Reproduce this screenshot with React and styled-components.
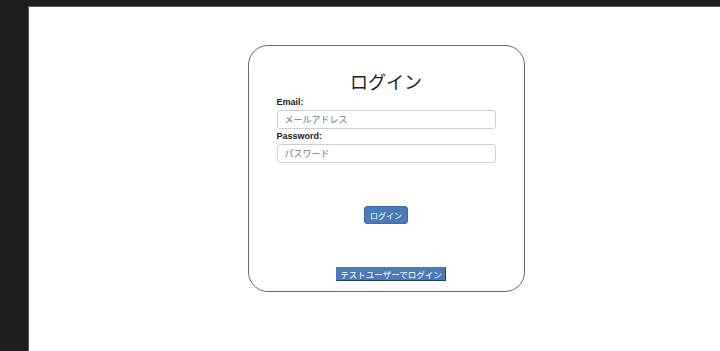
import React, { useState } from 'react'
import styled, { createGlobalStyle } from 'styled-components'

const GlobalStyle = createGlobalStyle`
html,body{
    margin:0;
    padding:0;
    background-color:#1e1e1e;
    overflow:hidden;
    font-family:"Liberation Sans","Noto Sans CJK JP",Arial,sans-serif;
}
`

function App(){
    const [email,setEmail]=useState("")
    const [password,setPassword]=useState("")

    return(
       <>
       <GlobalStyle/>
       <Screen>
           <Page>
               <Card onSubmit={(e)=>e.preventDefault()}>
                   <Title>ログイン</Title>
                   <Label>Email:</Label>
                   <Input type="email" value={email} placeholder="メールアドレス" onChange={(e)=>setEmail(e.target.value)} />
                   <Label>Password:</Label>
                   <Input type="password" value={password} placeholder="パスワード" onChange={(e)=>setPassword(e.target.value)} />
                   <LoginButton type="submit">ログイン</LoginButton>
                   <TestButton type="button">テストユーザーでログイン</TestButton>
               </Card>
           </Page>
       </Screen>
       </>
    )
}

const Screen=styled.div`
height:351px;
padding:6px 0 0 28px;
box-sizing:border-box;
`
const Page=styled.div`
width:715px;
height:100%;
background-color:#fff;
border-top:1px solid #5a5a5a;
border-left:1px solid #5a5a5a;
box-sizing:border-box;
display:flex;
justify-content:center;
align-items:flex-start;
padding-top:38px;
`
const Card=styled.form`
width:277px;
box-sizing:border-box;
border:1px solid #6b6b6b;
border-radius:20px;
padding:26px 28px 10px 28px;
display:flex;
flex-direction:column;
`
const Title=styled.h1`
margin:0;
font-size:18px;
line-height:23px;
font-weight:400;
color:#222;
text-align:center;
`
const Label=styled.label`
font-size:9px;
line-height:11px;
font-weight:700;
color:#222;
margin-top:2px;
`
const Input=styled.input`
margin-top:2px;
height:19px;
box-sizing:border-box;
border:1px solid #cfcfcf;
border-radius:3px;
padding:0 7px;
font-size:9px;
font-family:inherit;
color:#333;
::placeholder{
    color:#9a9a9a;
}
:focus{
    outline:none;
}
`
const LoginButton=styled.button`
align-self:center;
margin-top:43px;
width:44px;
height:18px;
padding:0;
border:1px solid #3f6ea8;
border-radius:3px;
background-color:#4a7ab8;
color:#fff;
font-size:8px;
font-family:inherit;
cursor:pointer;
`
const TestButton=styled.button`
align-self:center;
margin:43px 0 0 10px;
width:110px;
height:14px;
padding:0;
border:1px solid #4a7ab8;
border-right-color:#1f3f6a;
border-bottom-color:#1f3f6a;
border-radius:0;
background-color:#4a7ab8;
color:#fff;
font-size:8.5px;
font-weight:400;
font-family:inherit;
cursor:pointer;
`

export default App;
